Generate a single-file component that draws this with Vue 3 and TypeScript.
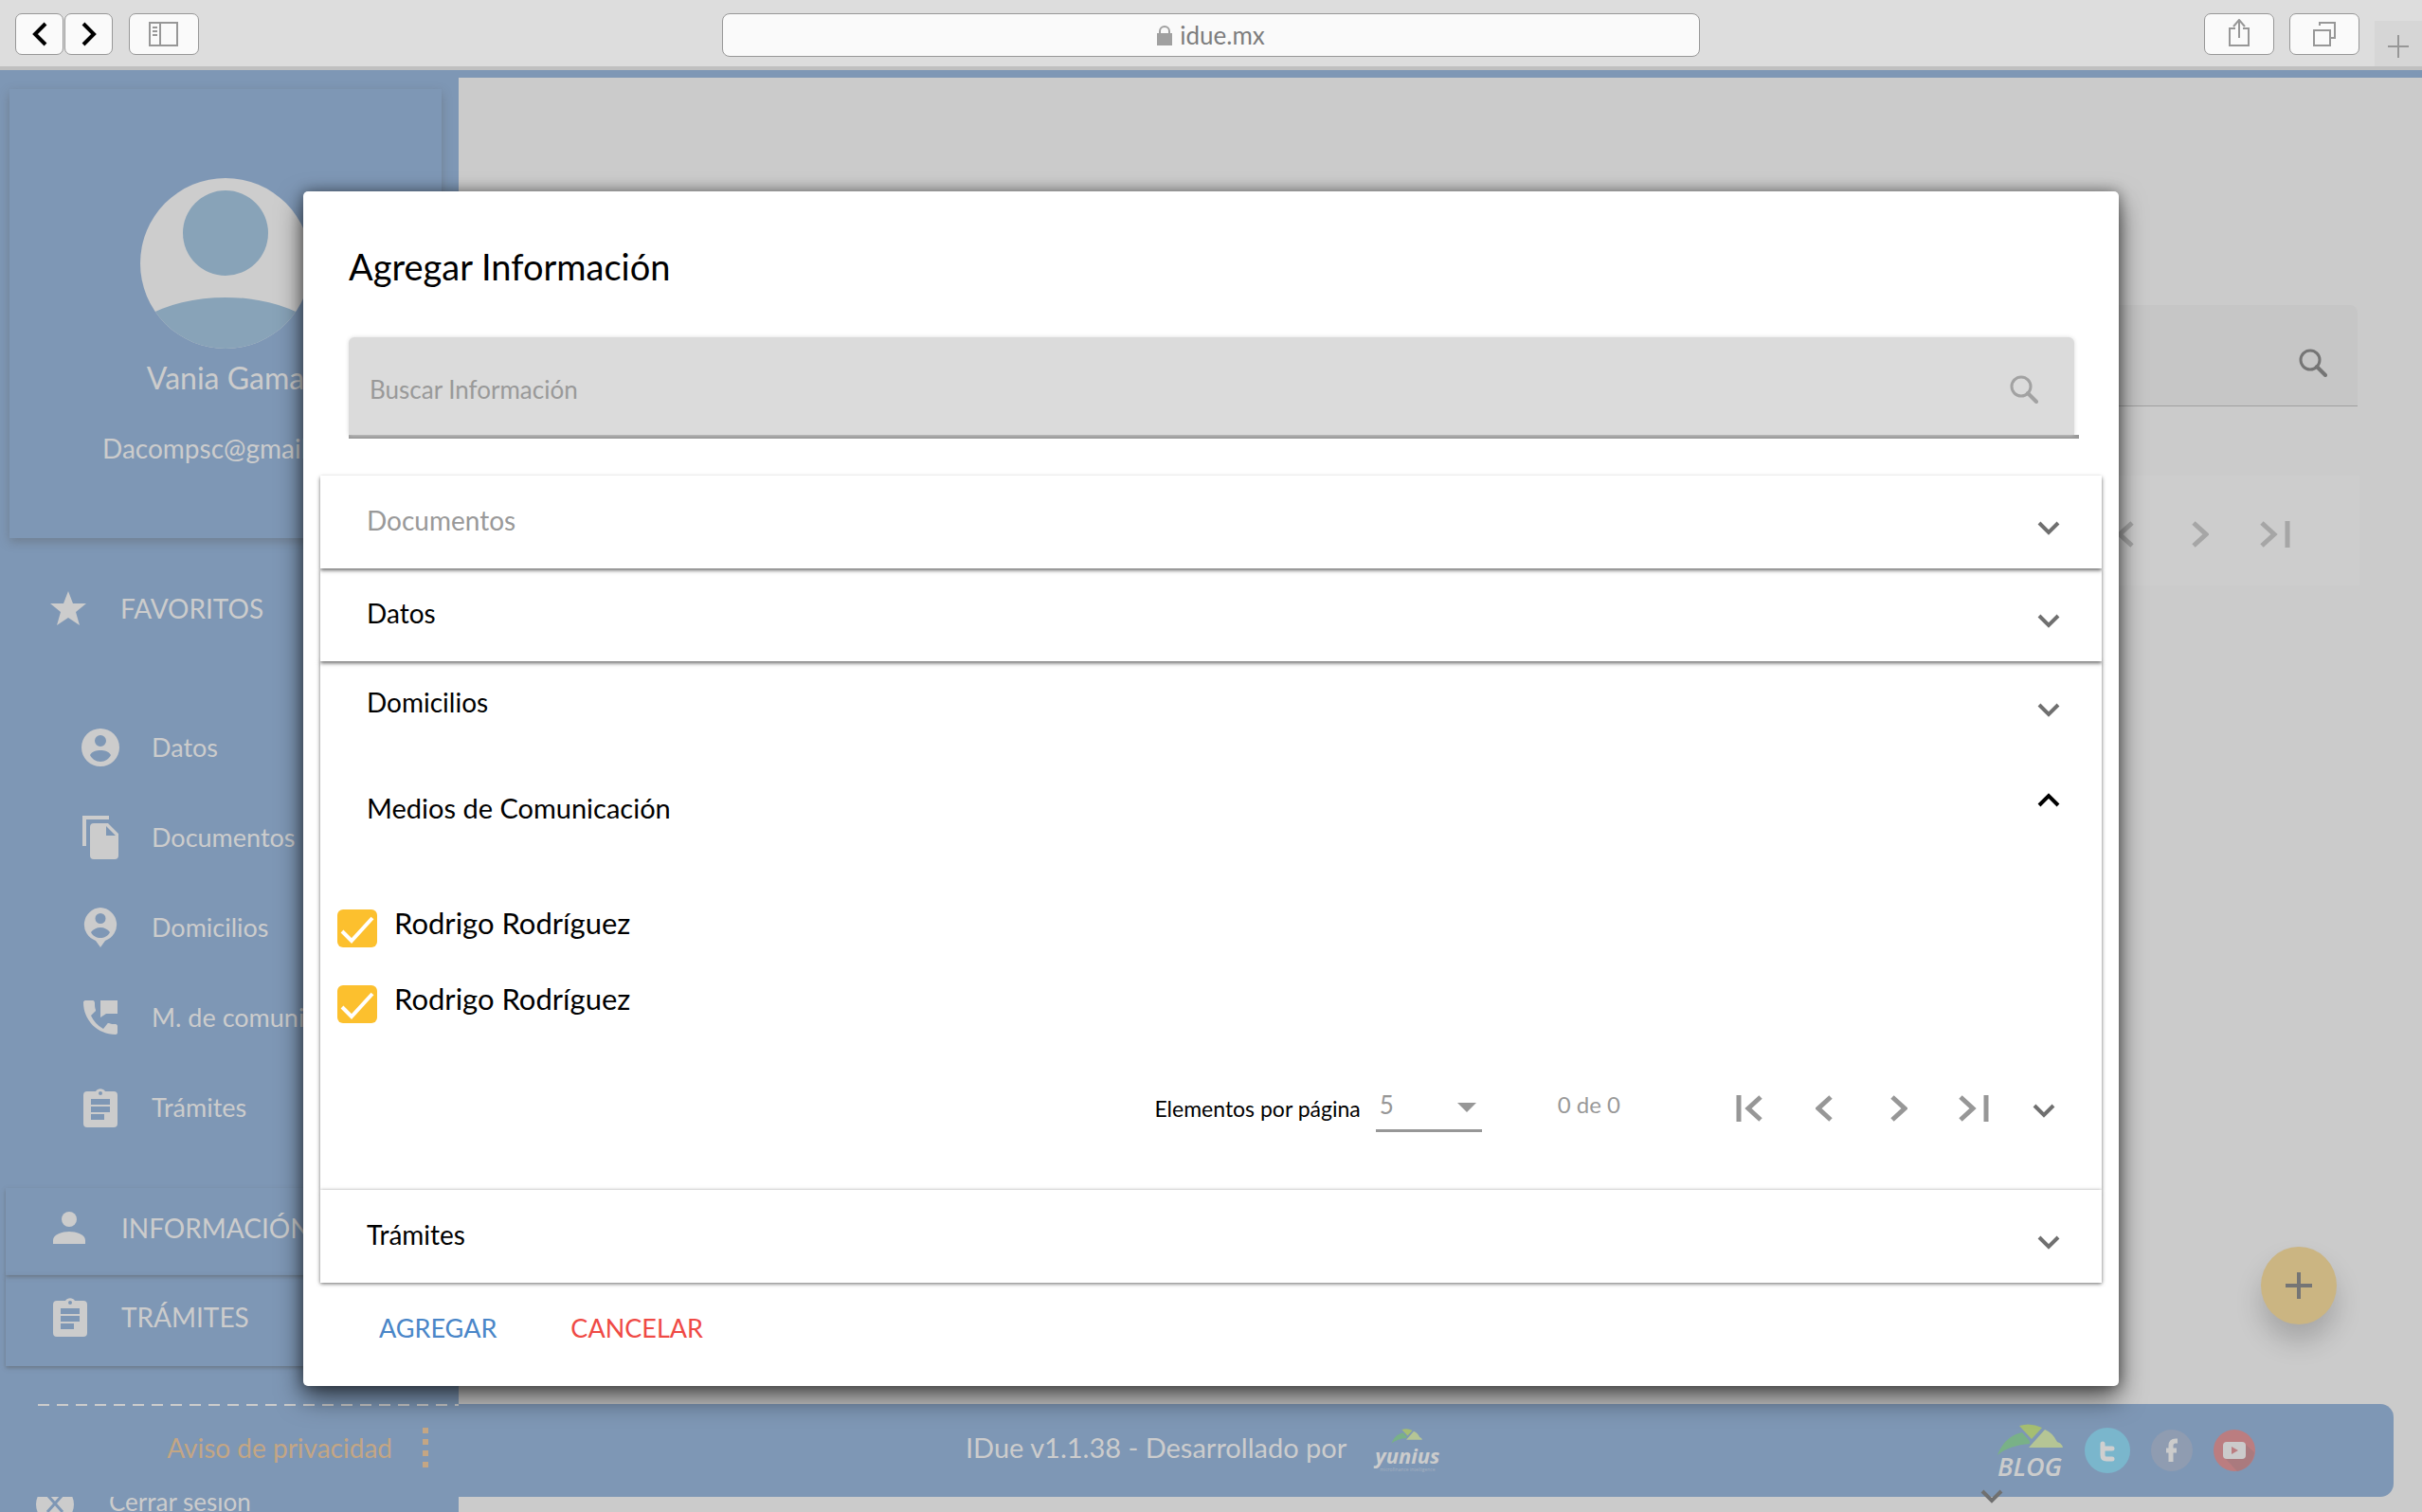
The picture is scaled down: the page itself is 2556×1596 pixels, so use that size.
<script setup lang="ts">
import { ref } from 'vue'

interface Favorite {
  label: string
  icon: string
  box: string
}

interface Contact {
  id: string
  name: string
  selected: boolean
}

const clipboard =
  'M32 4h-9a6 6 0 0 0-10 0H4a4 4 0 0 0-4 4v30a4 4 0 0 0 4 4h28a4 4 0 0 0 4-4V8a4 4 0 0 0-4-4zM18 4a2 2 0 1 1 0 4 2 2 0 0 1 0-4zM22 34H8v-6h14zM28 26H8v-6h20zM28 18H8v-6h20z'

const favorites: Favorite[] = [
  {
    label: 'Datos',
    box: '0 0 40 40',
    icon: 'M20 0a20 20 0 1 0 0 40 20 20 0 0 0 0-40zM20 7a6 6 0 1 1 0 12 6 6 0 0 1 0-12zM20 35c-5 0-9-3-11-7 2-4 7-5 11-5s9 1 11 5c-2 4-6 7-11 7z',
  },
  {
    label: 'Documentos',
    box: '0 0 38 46',
    icon: 'M28 0H0v32h4V4h24zM27 8H12a4 4 0 0 0-4 4v30a4 4 0 0 0 4 4h22a4 4 0 0 0 4-4V19zM25 11l10 10H25z',
  },
  {
    label: 'Domicilios',
    box: '0 0 36 42',
    icon: 'M18 0a18 18 0 0 0-5 35l5 7 5-7A18 18 0 0 0 18 0zM18 6a5 5 0 1 1 0 11 5 5 0 0 1 0-11zM18 32c-4 0-8-2-10-6 2-3 6-5 10-5s8 2 10 5c-2 4-6 6-10 6z',
  },
  {
    label: 'M. de comunicación',
    box: '0 0 36 36',
    icon: 'M34 25c-3 0-5 0-7-1-1 0-2 0-2 1l-4 5a30 30 0 0 1-13-14l4-4c1-1 1-1 1-2-1-2-1-5-1-7 0-2-1-3-2-3H2C1 0 0 1 0 2c0 19 15 34 34 34 1 0 2-1 2-2v-7c0-1-1-2-2-2zM18 0v18l6-4h12V0z',
  },
  { label: 'Trámites', box: '0 0 36 42', icon: clipboard },
]

const contacts = ref<Contact[]>([
  { id: 'contact-1', name: 'Rodrigo Rodríguez', selected: true },
  { id: 'contact-2', name: 'Rodrigo Rodríguez', selected: true },
])
const query = ref('')
const pageSize = ref('5')
</script>

<template>
  <div class="window">
    <header class="toolbar">
      <nav class="history">
        <button class="tool nav" aria-label="Atrás">
          <svg width="16" height="26"><path d="M14 2 3 13l11 11" stroke="#000" stroke-width="4" fill="none" /></svg>
        </button>
        <button class="tool nav" aria-label="Adelante">
          <svg width="16" height="26"><path d="m2 2 11 11L2 24" stroke="#000" stroke-width="4" fill="none" /></svg>
        </button>
      </nav>
      <button class="tool wide side-toggle" aria-label="Barra lateral">
        <svg width="32" height="26" fill="none" stroke="#979797" stroke-width="2">
          <path d="M1 1h29v24H1zM12 1v24M4 6h5M4 10h5M4 14h5" />
        </svg>
      </button>
      <div class="address">
        <svg width="16" height="22"><path d="M0 9h16v13H0z" fill="#a0a0a0" /><path d="M3 10V7a5 5 0 0 1 10 0v3" fill="none" stroke="#a0a0a0" stroke-width="2" /></svg>
        <span>idue.mx</span>
      </div>
      <div class="window-tools">
        <button class="tool wide" aria-label="Compartir">
          <svg width="24" height="32" fill="none" stroke="#979797" stroke-width="2">
            <path d="M8 10H2v18h20V10h-6M12 20V2M6 8l6-7 6 7" />
          </svg>
        </button>
        <button class="tool wide" aria-label="Pestañas">
          <svg width="26" height="28" fill="none" stroke="#979797" stroke-width="2">
            <path d="M2 10h17v16H2zM8 5V2h16v16h-4" />
          </svg>
        </button>
      </div>
      <button class="new-tab" aria-label="Nueva pestaña">
        <svg width="22" height="24"><path d="M0 12h22M11 0v24" stroke="#979797" stroke-width="2" /></svg>
      </button>
    </header>

    <div class="page">
      <aside class="sidebar">
        <section class="profile">
          <svg class="avatar" viewBox="0 0 180 180">
            <defs><clipPath id="face"><circle cx="90" cy="90" r="90" /></clipPath></defs>
            <circle cx="90" cy="90" r="90" fill="#cdcdcd" />
            <g clip-path="url(#face)" fill="#88a3b8">
              <circle cx="90" cy="58" r="45" />
              <ellipse cx="90" cy="196" rx="120" ry="70" />
            </g>
          </svg>
          <p class="name">Vania Gama</p>
          <p class="mail">Dacompsc@gmail.com</p>
        </section>

        <h2 class="section favorites-title">
          <svg width="38" height="36" viewBox="0 0 38 36"><path fill="#cccccc" d="m19 0 5 13h14L27 22l4 14-12-8-12 8 4-14L0 13h14z" /></svg>
          <span>FAVORITOS</span>
        </h2>
        <ul class="favorites">
          <li v-for="item in favorites" :key="item.label">
            <a href="#">
              <span class="slot">
                <svg :viewBox="item.box" :width="item.box.split(' ')[2]" :height="item.box.split(' ')[3]">
                  <path :d="item.icon" fill="#cccccc" fill-rule="evenodd" />
                </svg>
              </span>
              <span>{{ item.label }}</span>
            </a>
          </li>
        </ul>
        <a href="#" class="section card">
          <svg width="38" height="34" viewBox="0 0 38 34"><circle cx="19" cy="8" r="8" fill="#cccccc" /><path fill="#cccccc" d="M2 34v-4c0-6 10-9 17-9s17 3 17 9v4z" /></svg>
          <span>INFORMACIÓN</span>
        </a>
        <a href="#" class="section card">
          <svg width="38" height="42" viewBox="-2 0 38 42"><path :d="clipboard" fill="#cccccc" fill-rule="evenodd" /></svg>
          <span>TRÁMITES</span>
        </a>
        <div class="dashes"></div>
        <a href="#" class="privacy">
          <span>Aviso de privacidad</span>
          <span class="dots"><i></i><i></i><i></i><i></i></span>
        </a>
        <a href="#" class="logout">
          <svg width="40" height="40"><circle cx="20" cy="20" r="20" fill="#cccccc" /><path d="m12 10 16 18M28 10 12 28" stroke="#7e97b5" stroke-width="3" /></svg>
          <span>Cerrar sesión</span>
        </a>
      </aside>

      <main class="content">
        <div class="page-search">
          <svg width="30" height="30" fill="none" stroke="#757575"><circle cx="12" cy="12" r="10" stroke-width="3" /><path d="m19 19 9 9" stroke-width="4" stroke-linecap="round" /></svg>
        </div>
        <div class="page-pager">
          <button class="pager" aria-label="Anterior"><svg width="18" height="28"><path d="M16 2 3 14l13 12" /></svg></button>
          <button class="pager" aria-label="Siguiente"><svg width="18" height="28"><path d="m2 2 13 12L2 26" /></svg></button>
          <button class="pager" aria-label="Última"><svg width="32" height="28"><path d="m2 2 13 12L2 26M29 0v28" /></svg></button>
        </div>
        <button class="fab" aria-label="Agregar">
          <svg width="28" height="28"><path d="M0 14h28M14 0v28" stroke="#757575" stroke-width="4" /></svg>
        </button>

        <footer class="footer">
          <span>IDue v1.1.38 - Desarrollado por</span>
          <div class="yunius">
            <svg viewBox="0 0 70 34" width="34" height="16">
              <path fill="#79b187" d="M0 33C4 22 12 12 26 9l8 9v3C20 22 8 26 0 33z" />
              <path fill="#a5be72" d="M23 2q12-4 24 2L36 16z" />
              <path fill="#b5c595" d="M50 6q8 3 13 13 5 1 6 6H33z" />
            </svg>
            <b>yunius</b>
            <small>microfinance intelligence</small>
          </div>
          <div class="social">
            <a href="#" class="blog">
              <svg viewBox="0 0 70 34" width="70" height="34">
                <path fill="#79b187" d="M0 33C4 22 12 12 26 9l8 9v3C20 22 8 26 0 33z" />
                <path fill="#a5be72" d="M23 2q12-4 24 2L36 16z" />
                <path fill="#b5c595" d="M50 6q8 3 13 13 5 1 6 6H33z" />
              </svg>
              <span>BLOG</span>
            </a>
            <a href="#" aria-label="Twitter">
              <svg width="48" height="48"><circle cx="24" cy="24" r="24" fill="#7ab6cc" /><path d="M19 17v12q0 4 4 4h6M19 22h10" fill="none" stroke="#cfcfcf" stroke-width="5" stroke-linecap="round" /></svg>
            </a>
            <a href="#" aria-label="Facebook">
              <svg width="44" height="44"><circle cx="22" cy="22" r="22" fill="#8f9cb1" /><path d="M21 34V17q0-5 5-5h2M16 22h11" fill="none" stroke="#cbcbcb" stroke-width="5" /></svg>
            </a>
            <a href="#" aria-label="YouTube">
              <svg width="44" height="44"><circle cx="22" cy="22" r="22" fill="#bb7d80" /><path d="m34 16 9 8a22 22 0 0 1-18 20L12 30z" fill="#aa7a7e" /><rect x="10" y="13" width="24" height="18" rx="4" fill="#cbcbcb" /><path d="m19 18 7 4-7 4z" fill="#bb7d80" /></svg>
            </a>
          </div>
          <svg class="footer-caret caret" width="24" height="16"><path d="m2 2 10 10L22 2" /></svg>
        </footer>
      </main>
    </div>

    <div class="overlay">
      <section class="modal" role="dialog" aria-labelledby="modal-title">
        <h1 id="modal-title">Agregar Información</h1>
        <div class="search">
          <div class="search-box">
            <input v-model="query" type="text" placeholder="Buscar Información" aria-label="Buscar Información" />
            <svg width="30" height="30" fill="none" stroke="#a2a2a2"><circle cx="12" cy="12" r="10" stroke-width="3" /><path d="m19 19 9 9" stroke-width="4" stroke-linecap="round" /></svg>
          </div>
        </div>

        <div class="accordion">
          <section class="panel raised">
            <button class="row muted"><span>Documentos</span><svg class="caret" width="24" height="16"><path d="m2 2 10 10L22 2" /></svg></button>
          </section>
          <section class="panel raised">
            <button class="row"><span>Datos</span><svg class="caret" width="24" height="16"><path d="m2 2 10 10L22 2" /></svg></button>
          </section>
          <section class="panel">
            <button class="row short"><span>Domicilios</span><svg class="caret" width="24" height="16"><path d="m2 2 10 10L22 2" /></svg></button>
            <button class="row open"><span>Medios de Comunicación</span><svg class="caret" width="24" height="16"><path d="m2 13 10-10 10 10" /></svg></button>
            <ul class="contacts">
              <li v-for="contact in contacts" :key="contact.id">
                <input :id="contact.id" v-model="contact.selected" type="checkbox" />
                <svg class="tick" width="42" height="40"><path d="m5 23 10 10L37 9" fill="none" stroke="#fff" stroke-width="4" /></svg>
                <label :for="contact.id">{{ contact.name }}</label>
              </li>
            </ul>
            <div class="pagination">
              <label for="page-size">Elementos por página</label>
              <div class="size">
                <select id="page-size" v-model="pageSize"><option>5</option><option>10</option></select>
                <svg width="20" height="10"><path d="M0 0h20L10 10z" fill="#979797" /></svg>
              </div>
              <span class="range">0 de 0</span>
              <button class="pager" aria-label="Primera"><svg width="28" height="28"><path d="M3 0v28M26 2 13 14l13 12" /></svg></button>
              <button class="pager" aria-label="Anterior"><svg width="18" height="28"><path d="M16 2 3 14l13 12" /></svg></button>
              <button class="pager" aria-label="Siguiente"><svg width="18" height="28"><path d="m2 2 13 12L2 26" /></svg></button>
              <button class="pager" aria-label="Última"><svg width="32" height="28"><path d="m2 2 13 12L2 26M29 0v28" /></svg></button>
              <button class="more" aria-label="Más"><svg class="caret" width="24" height="16"><path d="m2 2 10 10L22 2" /></svg></button>
            </div>
          </section>
          <section class="panel">
            <button class="row"><span>Trámites</span><svg class="caret" width="24" height="16"><path d="m2 2 10 10L22 2" /></svg></button>
          </section>
        </div>

        <div class="actions">
          <button class="add">AGREGAR</button>
          <button class="cancel">CANCELAR</button>
        </div>
      </section>
    </div>
  </div>
</template>

<style>
html,
body {
  margin: 0;
  background: #cbcbcb;
}
</style>

<style scoped>
* {
  box-sizing: border-box;
}
button,
input,
select {
  font: inherit;
  color: inherit;
  border: 0;
  padding: 0;
  margin: 0;
  background: none;
  outline: 0;
}
ul,
p,
h1,
h2 {
  margin: 0;
  padding: 0;
  list-style: none;
  font-weight: 400;
}
a {
  color: inherit;
  text-decoration: none;
}
svg {
  display: block;
  flex: none;
}
.window {
  position: relative;
  display: flex;
  flex-direction: column;
  height: 100vh;
  overflow: hidden;
  font-family: Lato, sans-serif;
  font-size: 28px;
  background: #cbcbcb;
}

/* Browser toolbar */
.toolbar {
  position: relative;
  display: flex;
  flex: none;
  align-items: flex-start;
  height: 74px;
  padding: 14px 0 0 16px;
  background: #dddddd;
  border-bottom: 4px solid #c0c0c0;
}
.history {
  display: flex;
  gap: 1px;
  margin-right: 17px;
}
.tool {
  display: flex;
  align-items: center;
  justify-content: center;
  height: 44px;
  border: 1px solid #979797;
  border-radius: 7px;
  background: #fafafa;
}
.nav {
  width: 51px;
}
.wide {
  width: 74px;
}
.side-toggle {
  margin-right: 20px;
}
.address {
  display: flex;
  flex: 1;
  align-items: center;
  justify-content: center;
  gap: 8px;
  height: 46px;
  max-width: 1032px;
  margin: 0 auto;
  border: 1px solid #979797;
  border-radius: 8px;
  background: #fafafa;
  color: #7d7d7d;
  font-size: 26px;
}
.window-tools {
  display: flex;
  gap: 16px;
  margin-right: 16px;
}
.new-tab {
  display: flex;
  align-items: center;
  justify-content: center;
  align-self: flex-end;
  width: 50px;
  height: 48px;
  padding-top: 6px;
  background: #d6d6d6;
}

/* Page */
.page {
  display: flex;
  flex: 1;
  min-height: 0;
}
.sidebar {
  display: flex;
  flex: none;
  flex-direction: column;
  width: 484px;
  background: #7e97b5;
  color: #cccccc;
}
.profile {
  display: flex;
  flex: none;
  flex-direction: column;
  align-items: center;
  height: 474px;
  margin: 20px 18px 0 10px;
  padding-top: 94px;
  box-shadow: 0 4px 10px rgba(90, 90, 90, 0.4);
}
.avatar {
  width: 180px;
  height: 180px;
}
.name {
  margin-top: 11px;
  font-size: 32px;
  line-height: 40px;
}
.mail {
  align-self: flex-start;
  margin: 34px 0 0 98px;
  font-size: 28px;
  line-height: 40px;
}
.section {
  display: flex;
  flex: none;
  align-items: center;
  gap: 36px;
  font-size: 28px;
}
.favorites-title {
  height: 98px;
  margin: 25px 0 50px;
  padding-left: 53px;
}
.favorites {
  margin-bottom: 38px;
}
.favorites a {
  display: flex;
  align-items: center;
  gap: 34px;
  height: 95px;
  padding-left: 86px;
  font-size: 27px;
}
.slot {
  display: flex;
  justify-content: center;
  width: 40px;
}
.card {
  height: 92px;
  margin-left: 6px;
  padding: 0 0 8px 48px;
  box-shadow: 0 2px 4px rgba(90, 90, 90, 0.5);
}
.card + .card {
  height: 96px;
}
.dashes {
  flex: none;
  height: 2px;
  margin: 40px 0 0 32px;
  background: repeating-linear-gradient(90deg, transparent 0 8px, #cccccc 8px 20px);
}
.privacy {
  display: flex;
  flex: none;
  align-items: center;
  justify-content: flex-end;
  gap: 32px;
  height: 88px;
  margin-bottom: 8px;
  padding-right: 32px;
  color: #c4a684;
}
.dots {
  display: flex;
  flex-direction: column;
  gap: 6px;
}
.dots i {
  width: 6px;
  height: 6px;
  background: #c4a684;
}
.logout {
  display: flex;
  align-items: center;
  gap: 37px;
  height: 16px;
  padding-left: 38px;
  overflow: hidden;
  font-size: 26px;
  line-height: 12px;
}
.logout span {
  padding-bottom: 6px;
}
.content {
  position: relative;
  display: flex;
  flex: 1;
  flex-direction: column;
  min-width: 0;
  border-top: 8px solid #7e97b5;
}
.page-search {
  display: flex;
  flex: none;
  align-items: center;
  justify-content: flex-end;
  height: 107px;
  margin: 240px 68px 0;
  padding: 16px 32px 0 0;
  border-bottom: 1px solid #a0a0a0;
  border-radius: 8px 8px 0 0;
  background: #c6c6c6;
}
.page-pager {
  display: flex;
  flex: none;
  align-items: center;
  justify-content: flex-end;
  height: 116px;
  margin: 73px 66px 0;
  padding: 8px 50px 0 0;
  background: #cdcdcd;
}
.page-pager .pager path {
  stroke: #a6a6a6;
}
.pager {
  display: flex;
  align-items: center;
  justify-content: center;
  width: 79px;
  height: 40px;
}
.pager path {
  fill: none;
  stroke: #979797;
  stroke-width: 5px;
}
.fab {
  position: absolute;
  right: 90px;
  bottom: 198px;
  display: flex;
  align-items: center;
  justify-content: center;
  width: 80px;
  height: 82px;
  border-radius: 50%;
  background: #cbb582;
  box-shadow: 0 18px 28px rgba(0, 0, 0, 0.18);
}
.footer {
  position: relative;
  display: flex;
  flex: none;
  align-items: center;
  height: 98px;
  margin: auto 30px 16px 0;
  padding: 0 146px 8px 535px;
  border-radius: 0 14px 14px 0;
  background: #7e97b5;
  color: #cccccc;
  font-size: 29px;
}
.yunius {
  display: flex;
  flex-direction: column;
  align-items: center;
  margin: 8px 0 0 30px;
}
.yunius b {
  font: italic 700 22px/24px 'Open Sans', sans-serif;
}
.yunius small {
  color: #a5b1c0;
  font: 5px/6px 'Open Sans', sans-serif;
}
.social {
  display: flex;
  align-items: center;
  gap: 22px;
  margin: 8px 0 0 auto;
}
.blog span {
  display: block;
  font: italic 600 27px/22px 'Open Sans', sans-serif;
}
.footer-caret {
  position: absolute;
  right: 412px;
  bottom: -8px;
}
.caret path {
  fill: none;
  stroke: #707070;
  stroke-width: 4px;
}

/* Modal */
.overlay {
  position: absolute;
  top: 202px;
  left: 320px;
  right: 320px;
}
.modal {
  border-radius: 5px;
  background: #ffffff;
  color: #000000;
  box-shadow:
    0 12px 28px rgba(0, 0, 0, 0.6),
    0 0 14px rgba(0, 0, 0, 0.4);
}
.modal h1 {
  padding: 49px 48px 0;
  font-size: 38px;
  line-height: 60px;
}
.search {
  margin: 45px 42px 39px 48px;
  border-bottom: 4px solid #979797;
}
.search-box {
  display: flex;
  align-items: center;
  height: 103px;
  margin-right: 5px;
  padding: 6px 38px 0 22px;
  border-radius: 6px 6px 0 0;
  background: #dbdbdb;
  box-shadow: 0 0 4px #dbdbdb;
}
.search-box input {
  flex: 1;
  height: 60px;
  font-size: 26px;
}
.search-box input::placeholder {
  color: #999999;
  opacity: 1;
}
.accordion {
  margin: 0 18px;
}
.panel {
  position: relative;
  background: #ffffff;
  box-shadow: 0 1px 4px rgba(0, 0, 0, 0.6);
}
.raised {
  z-index: 1;
  box-shadow: 0 2px 4px rgba(0, 0, 0, 0.6);
}
.raised:first-child {
  z-index: 2;
}
.row {
  display: flex;
  align-items: center;
  justify-content: space-between;
  width: 100%;
  height: 98px;
  padding: 0 44px 4px 49px;
}
.row .caret {
  margin-top: 18px;
}
.muted {
  color: #999999;
}
.short {
  height: 90px;
}
.open {
  height: 132px;
  font-size: 29px;
}
.open .caret {
  margin: 0 0 14px;
}
.open .caret path {
  stroke: #000000;
}
.contacts {
  display: flex;
  flex-direction: column;
  gap: 40px;
  padding: 40px 18px 50px;
  font-size: 31px;
}
.contacts li {
  position: relative;
  display: flex;
  gap: 18px;
}
.contacts input {
  appearance: none;
  width: 42px;
  height: 40px;
  border-radius: 6px;
  background: #fcc02e;
}
.contacts label {
  line-height: 28px;
}
.tick {
  position: absolute;
  top: 0;
  left: 0;
  pointer-events: none;
}
.pagination {
  display: flex;
  align-items: center;
  justify-content: flex-end;
  height: 126px;
  padding: 0 37px 46px 0;
}
.pagination label {
  margin-right: 16px;
  font-size: 23px;
}
.size {
  position: relative;
  display: flex;
  align-items: center;
  width: 112px;
  height: 50px;
  border-bottom: 3px solid #979797;
  color: #979797;
  font-size: 26px;
}
.size select {
  appearance: none;
  width: 100%;
  height: 48px;
  padding: 0 0 6px 4px;
}
.size svg {
  position: absolute;
  right: 6px;
  pointer-events: none;
}
.range {
  margin: 0 96px 10px 80px;
  color: #999999;
  font-size: 24px;
}
.more {
  display: flex;
  align-items: center;
  justify-content: center;
  width: 48px;
  height: 48px;
  margin: 6px 0 0 11px;
}
.actions {
  display: flex;
  gap: 78px;
  padding: 28px 80px 41px;
}
.actions button {
  font-size: 27px;
  line-height: 40px;
}
.add {
  color: #4a86c8;
}
.cancel {
  color: #ef4a45;
}
</style>
